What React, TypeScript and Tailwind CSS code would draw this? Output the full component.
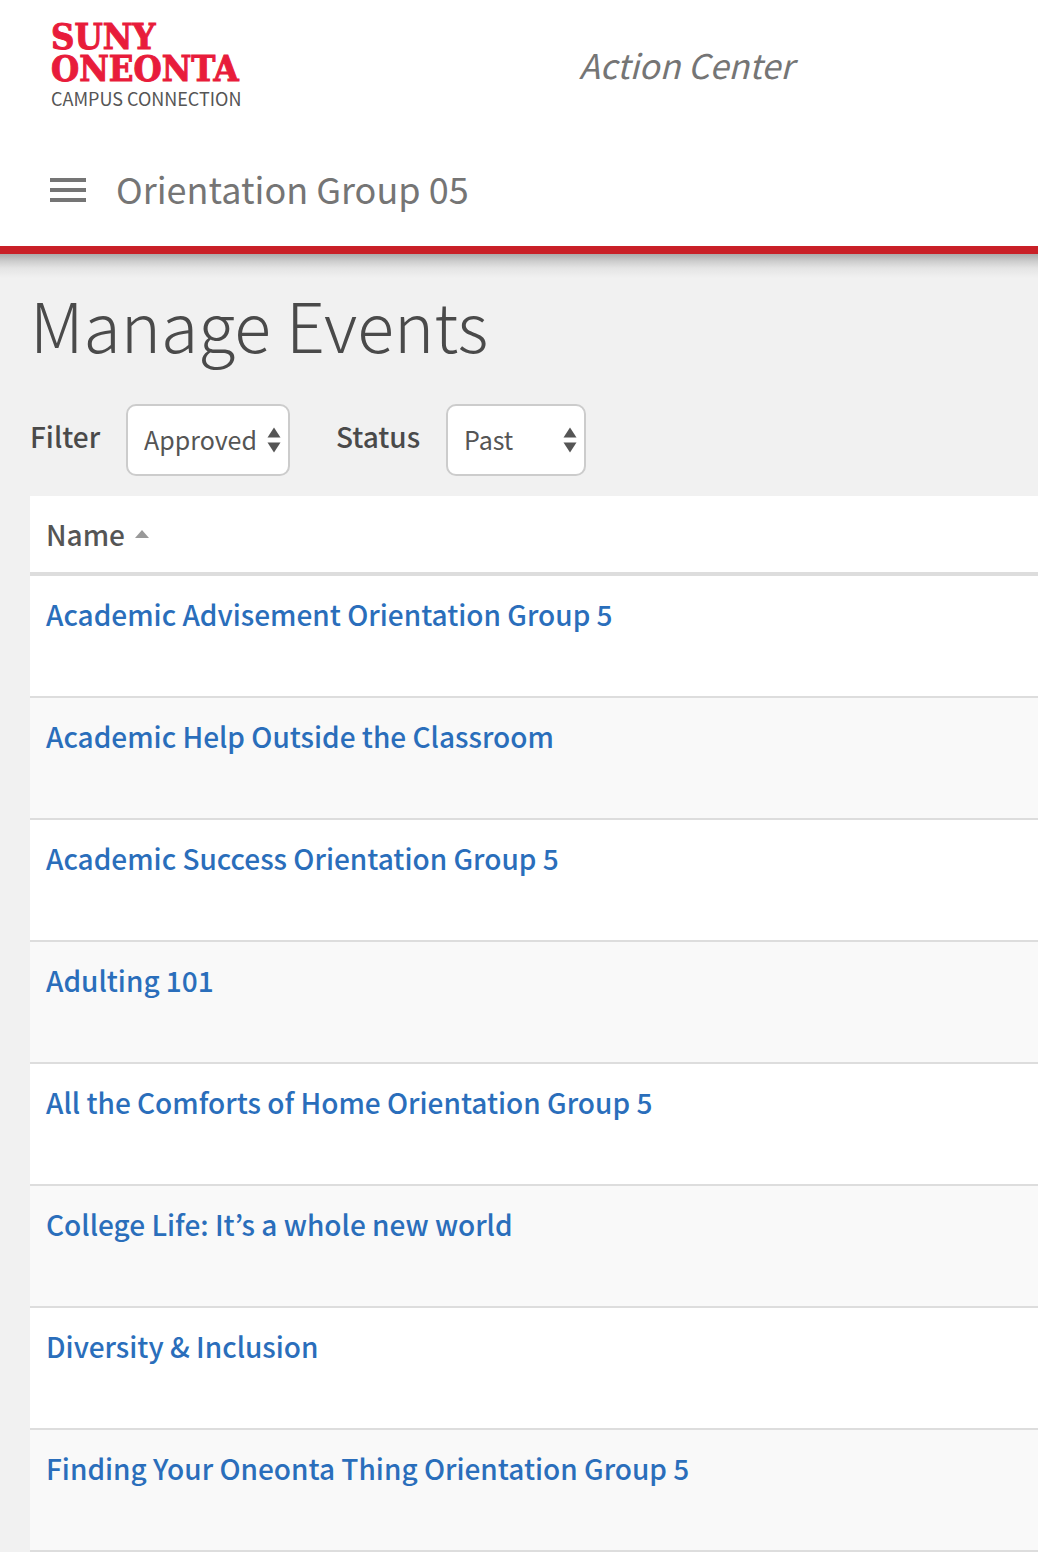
const events = [
  "Academic Advisement Orientation Group 5",
  "Academic Help Outside the Classroom",
  "Academic Success Orientation Group 5",
  "Adulting 101",
  "All the Comforts of Home Orientation Group 5",
  "College Life: It’s a whole new world",
  "Diversity & Inclusion",
  "Finding Your Oneonta Thing Orientation Group 5",
];

function SelectArrows() {
  return (
    <svg
      className="pointer-events-none absolute right-[9px] top-1/2 -translate-y-1/2"
      width="14"
      height="26"
      viewBox="0 0 14 26"
      fill="#555"
      aria-hidden="true"
    >
      <path d="M7 0.5 13.5 10.5H0.5Z" />
      <path d="M7 25.5 0.5 15.5H13.5Z" />
    </svg>
  );
}

function Logo() {
  return (
    <a href="#" className="block w-fit">
      <span className="block font-['DejaVu_Serif_Condensed','DejaVu_Serif',serif] text-4xl leading-8 font-bold text-[#e81c3b] [-webkit-text-stroke:1px_#e81c3b]">
        SUNY
        <br />
        ONEONTA
      </span>
      <span className="block text-lg leading-7 text-[#555]">CAMPUS CONNECTION</span>
    </a>
  );
}

export default function App() {
  return (
    <div className="min-h-screen bg-[#f1f1f1] font-['Noto_Sans_CJK_KR','Open_Sans',sans-serif] text-[#4a4a4a]">
      <header className="border-b-8 border-[#c92027] bg-white">
        <div className="grid grid-cols-2 px-[51px] pt-5">
          <Logo />
          <p className="pt-5 pl-15 text-[34px] leading-[50px] text-[#757575] italic">
            Action Center
          </p>
        </div>
        <div className="flex items-center gap-[30px] px-[50px] pt-[52px] pb-[30px]">
          <button type="button" aria-label="Menu" className="flex flex-col gap-[6px]">
            <span className="h-1 w-9 bg-[#757575]" />
            <span className="h-1 w-9 bg-[#757575]" />
            <span className="h-1 w-9 bg-[#757575]" />
          </button>
          <p className="pb-1 text-4xl leading-12 text-[#757575]">Orientation Group 05</p>
        </div>
      </header>

      <main className="bg-[linear-gradient(#ababab,#cccccc_7px,#e4e4e4_14px,#f1f1f1_24px)] pl-[30px]">
        <h1 className="pt-[22px] text-[68px] leading-[96px] font-light">Manage Events</h1>

        <form className="flex items-center pt-8 pb-5">
          <label htmlFor="filter" className="w-24 pb-2 text-[28px] leading-10 font-medium">
            Filter
          </label>
          <div className="relative">
            <select
              id="filter"
              defaultValue="Approved"
              className="h-[72px] w-[164px] appearance-none rounded-[10px] border-2 border-[#ccc] bg-white pl-4 text-[25px] text-[#555]"
            >
              <option>Approved</option>
              <option>Pending</option>
            </select>
            <SelectArrows />
          </div>
          <label htmlFor="status" className="ml-[46px] w-[110px] pb-2 text-[28px] leading-10 font-medium">
            Status
          </label>
          <div className="relative">
            <select
              id="status"
              defaultValue="Past"
              className="h-[72px] w-[140px] appearance-none rounded-[10px] border-2 border-[#ccc] bg-white pl-4 text-[25px] text-[#555]"
            >
              <option>Past</option>
              <option>Upcoming</option>
            </select>
            <SelectArrows />
          </div>
        </form>

        <table className="w-full border-separate border-spacing-0 bg-white text-left text-[28px] leading-10">
          <thead>
            <tr>
              <th className="h-20 border-b-4 border-[#ddd] px-4 font-medium text-[#555]">
                <span className="flex items-center gap-[10px]">
                  Name
                  <svg width="14" height="8" viewBox="0 0 14 8" fill="#999" aria-hidden="true">
                    <path d="M7 0 14 8H0Z" />
                  </svg>
                </span>
              </th>
            </tr>
          </thead>
          <tbody>
            {events.map((name) => (
              <tr key={name} className="even:bg-[#f9f9f9]">
                <td className="h-[122px] border-b-2 border-[#ddd] px-4 pt-[18px] align-top">
                  <a href="#" className="font-medium text-[#2a6ebb]">
                    {name}
                  </a>
                </td>
              </tr>
            ))}
          </tbody>
        </table>
      </main>
    </div>
  );
}
